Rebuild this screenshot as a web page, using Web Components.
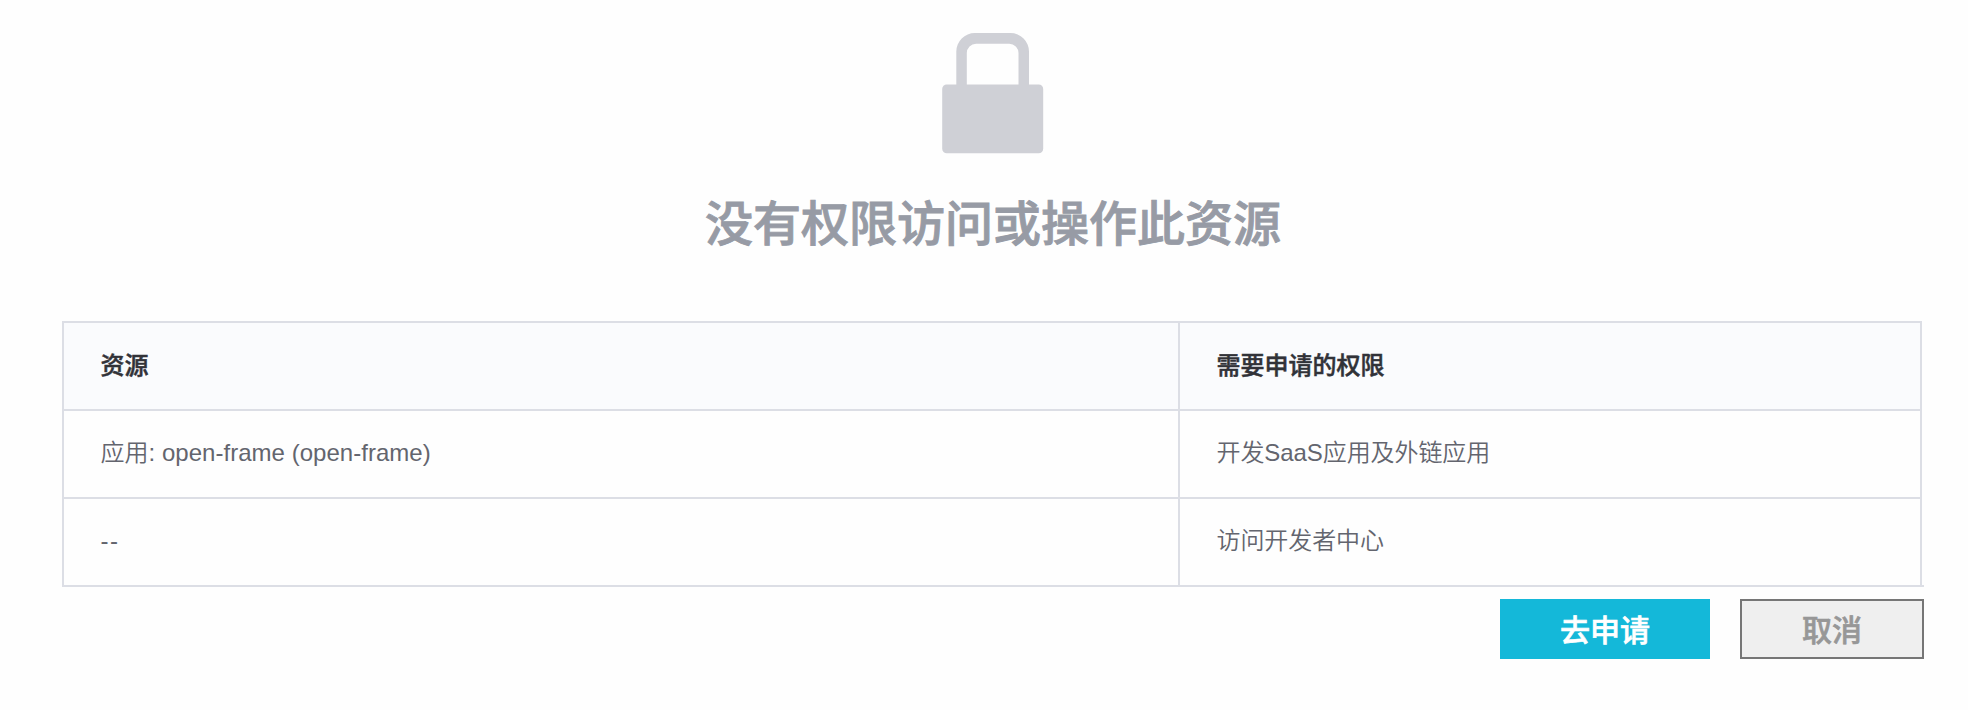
<!DOCTYPE html>
<html lang="zh-CN">
<head>
<meta charset="utf-8">
<title>没有权限</title>
<style>
body { margin: 0; background: #fefefe; font-family: "Liberation Sans", "Noto Sans CJK SC", sans-serif; }
</style>
</head>
<body>
<permission-page></permission-page>
<script>
const define = (name, html) => customElements.define(name, class extends HTMLElement {
  constructor() {
    super();
    const t = document.createElement('template');
    t.innerHTML = html;
    this.attachShadow({ mode: 'open' }).appendChild(t.content.cloneNode(true));
  }
});

define('lock-icon', `
<style>:host { display: block; width: 102px; height: 121px; } svg { display: block; }</style>
<svg width="102" height="121" viewBox="0 0 102 121" fill="#cfd0d6">
  <path d="M14.3 56V18.5A18.5 18.5 0 0 1 32.8 0H68.500A18.5 18.5 0 0 1 87 18.5V56H76.500V20A9.3 9.3 0 0 0 67.200 10.700H34.100A9.300 9.300 0 0 0 24.800 20V56Z"/>
  <rect x="0.200" y="51.500" width="101" height="68.700" rx="4.500"/>
</svg>`);

define('permission-title', `
<style>
:host { display: block; }
h1 { margin: 0; font-size: 48px; line-height: 72px; font-weight: 500; -webkit-text-stroke: 0.9px #979ba5; color: #979ba5; text-align: center; white-space: nowrap; }
</style>
<h1><slot></slot></h1>`);

define('table-row', `
<style>
:host { display: grid; grid-template-columns: 1114px 742px; width: 1856px; height: 86px; border: 2px solid #dcdee5; border-bottom: 0; background: #fefefe; color: #63656e; font-size: 24px; font-weight: 350; line-height: 84px; }
:host([head]) { background: #fafbfd; color: #313238; font-weight: 500; line-height: 86px; -webkit-text-stroke: 0.5px #313238; }
div { box-sizing: border-box; padding: 0 36.500px; white-space: pre; letter-spacing: 0.03px; }
.second { border-left: 2px solid #dcdee5; letter-spacing: -0.08px; }
:host([head]) div { letter-spacing: 0; }
</style>
<div><slot name="resource"></slot></div><div class="second"><slot name="permission"></slot></div>`);

define('permission-table', `
<style>:host { display: block; width: 1862px; box-sizing: border-box; border-bottom: 2px solid #dcdee5; }</style>
<slot></slot>`);

define('action-button', `
<style>
:host { display: block; }
button { display: block; box-sizing: border-box; margin: 0; padding: 1px 0 0; width: 184px; height: 60px; border: 2px solid #767676; border-radius: 0; background: #efefef; color: #979797; font: inherit; font-size: 30px; font-weight: 500; line-height: 55px; -webkit-text-stroke: 0.6px currentColor; }
:host([primary]) button { width: 210px; border-color: #14b8d9; background: #14b8d9; color: #fff; }
span { display: block; padding-top: 1px; height: 54px; }
</style>
<button type="button"><span><slot></slot></span></button>`);

define('permission-page', `
<style>
:host { display: flex; flex-direction: column; box-sizing: border-box; height: 710px; padding: 33px 44px 0 62px; }
lock-icon { margin-left: 880px; }
permission-title { margin-top: 35px; height: 72px; }
permission-table { margin-top: 60px; }
footer { display: flex; justify-content: flex-end; gap: 30px; margin-top: 12px; }
.dashes { letter-spacing: 1.500px; }
</style>
<lock-icon></lock-icon>
<permission-title>没有权限访问或操作此资源</permission-title>
<permission-table>
  <table-row head><span slot="resource">资源</span><span slot="permission">需要申请的权限</span></table-row>
  <table-row><span slot="resource">应用: open-frame (open-frame)</span><span slot="permission">开发SaaS应用及外链应用</span></table-row>
  <table-row><span slot="resource" class="dashes">--</span><span slot="permission">访问开发者中心</span></table-row>
</permission-table>
<footer><action-button primary>去申请</action-button><action-button>取消</action-button></footer>`);
</script>
</body>
</html>
